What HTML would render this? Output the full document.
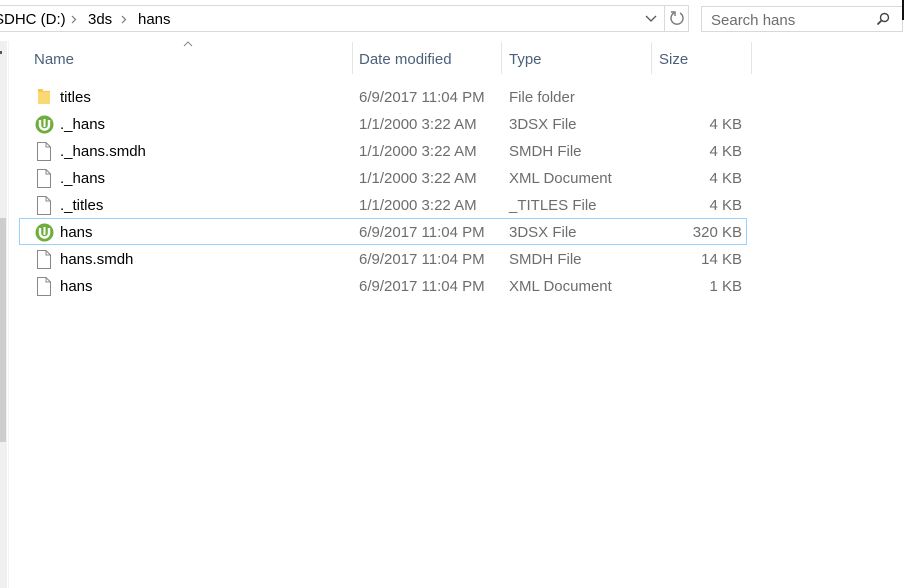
<!DOCTYPE html>
<html><head><style>
*{margin:0;padding:0;box-sizing:border-box}
body{width:904px;height:588px;background:#fff;position:relative;overflow:hidden;font-family:"Liberation Sans",sans-serif;font-size:15px;color:#000}
.a{position:absolute}
.row{position:absolute;left:0;width:760px;height:27px}
.row span{position:absolute;top:6px;white-space:nowrap}
.n{left:60px;color:#000}
.d{left:359px;color:#6d6d6d}
.t{left:509px;color:#6d6d6d}
.s{right:18px;color:#6d6d6d}
.ic{position:absolute;left:35px;top:5px}
</style></head><body>
<div class="a" style="left:-1px;top:5px;width:690px;height:27px;border:1px solid #d9d9d9"></div>
<div class="a" style="left:664px;top:5px;width:1px;height:27px;background:#d9d9d9"></div>
<div class="a" style="left:-6px;top:11px">SDHC (D:)</div>
<svg class="a" style="left:71px;top:15px" width="6" height="9"><path d="M1 1 L4.5 4.5 L1 8" stroke="#777" stroke-width="1.2" fill="none"/></svg>
<div class="a" style="left:88px;top:11px">3ds</div>
<svg class="a" style="left:121px;top:15px" width="6" height="9"><path d="M1 1 L4.5 4.5 L1 8" stroke="#777" stroke-width="1.2" fill="none"/></svg>
<div class="a" style="left:138px;top:11px">hans</div>
<svg class="a" style="left:645px;top:15px" width="12" height="8"><path d="M1 1 L6 6 L11 1" stroke="#555" stroke-width="1.3" fill="none"/></svg>
<svg class="a" style="left:669px;top:10px" width="16" height="16"><path d="M5 3 A6 6 0 1 0 11 3" stroke="#777" stroke-width="1.4" fill="none"/><path d="M2 2 L6 2 L6 6" stroke="#777" stroke-width="1.4" fill="none"/></svg>
<div class="a" style="left:701px;top:6px;width:202px;height:26px;border:1px solid #d9d9d9"></div>
<div class="a" style="left:711px;top:12px;color:#6d6d6d">Search hans</div>
<svg class="a" style="left:876px;top:12px" width="14" height="14"><circle cx="8.5" cy="5.5" r="4" stroke="#444" stroke-width="1.4" fill="none"/><path d="M5.5 8.5 L1.5 12.5" stroke="#444" stroke-width="1.8"/></svg>
<div class="a" style="left:902px;top:0;width:2px;height:20px;background:#111"></div>
<div class="a" style="left:0;top:41px;width:7px;height:547px;background:#f0f0f0"></div>
<div class="a" style="left:0;top:218px;width:6px;height:224px;background:#cdcdcd"></div>
<div class="a" style="left:8px;top:41px;width:1px;height:547px;background:#f3f3f3"></div>
<div class="a" style="left:0;top:51px;width:2px;height:3px;background:#555"></div>
<svg class="a" style="left:183px;top:41px" width="10" height="6"><path d="M1 5 L5 1 L9 5" stroke="#888" fill="none"/></svg>
<div class="a" style="left:34px;top:51px;color:#4c607a">Name</div>
<div class="a" style="left:359px;top:51px;color:#4c607a">Date modified</div>
<div class="a" style="left:509px;top:51px;color:#4c607a">Type</div>
<div class="a" style="left:659px;top:51px;color:#4c607a">Size</div>
<div class="a" style="left:352px;top:42px;width:1px;height:32px;background:#e5e5e5"></div>
<div class="a" style="left:501px;top:42px;width:1px;height:32px;background:#e5e5e5"></div>
<div class="a" style="left:651px;top:42px;width:1px;height:32px;background:#e5e5e5"></div>
<div class="a" style="left:751px;top:42px;width:1px;height:32px;background:#e5e5e5"></div>
<div class="a" style="left:19px;top:218px;width:728px;height:27px;border:1px solid #99d1ff"></div>

<div class="row" style="top:83px"><svg class="ic" style="left:37px" width="14" height="17"><path d="M1 1 H6 V3 H13 V16 H1 Z" fill="#f5c94f"/><rect x="1" y="4" width="12" height="12" fill="#fbd872"/></svg><span class="n">titles</span><span class="d">6/9/2017 11:04 PM</span><span class="t">File folder</span></div>

<div class="row" style="top:110px"><svg class="ic" width="19" height="19"><circle cx="9.5" cy="9.5" r="9" fill="#6fae3d"/><path d="M5 5 V10 A4.5 4.5 0 0 0 14 10 V5" stroke="#fff" stroke-width="2.4" fill="none"/><path d="M9.5 4 V12" stroke="#fff" stroke-width="2"/></svg><span class="n">._hans</span><span class="d">1/1/2000 3:22 AM</span><span class="t">3DSX File</span><span class="s">4 KB</span></div>

<div class="row" style="top:137px"><svg class="ic" style="left:37px" width="14" height="19"><path d="M0.5 0.5 H9 L13.5 5 V18.5 H0.5 Z" fill="#fff" stroke="#888"/><path d="M9 0.5 V5 H13.5" fill="none" stroke="#888"/></svg><span class="n">._hans.smdh</span><span class="d">1/1/2000 3:22 AM</span><span class="t">SMDH File</span><span class="s">4 KB</span></div>

<div class="row" style="top:164px"><svg class="ic" style="left:37px" width="14" height="19"><path d="M0.5 0.5 H9 L13.5 5 V18.5 H0.5 Z" fill="#fff" stroke="#888"/><path d="M9 0.5 V5 H13.5" fill="none" stroke="#888"/></svg><span class="n">._hans</span><span class="d">1/1/2000 3:22 AM</span><span class="t">XML Document</span><span class="s">4 KB</span></div>

<div class="row" style="top:191px"><svg class="ic" style="left:37px" width="14" height="19"><path d="M0.5 0.5 H9 L13.5 5 V18.5 H0.5 Z" fill="#fff" stroke="#888"/><path d="M9 0.5 V5 H13.5" fill="none" stroke="#888"/></svg><span class="n">._titles</span><span class="d">1/1/2000 3:22 AM</span><span class="t">_TITLES File</span><span class="s">4 KB</span></div>

<div class="row" style="top:218px"><svg class="ic" width="19" height="19"><circle cx="9.5" cy="9.5" r="9" fill="#6fae3d"/><path d="M5 5 V10 A4.5 4.5 0 0 0 14 10 V5" stroke="#fff" stroke-width="2.4" fill="none"/><path d="M9.5 4 V12" stroke="#fff" stroke-width="2"/></svg><span class="n">hans</span><span class="d">6/9/2017 11:04 PM</span><span class="t">3DSX File</span><span class="s">320 KB</span></div>

<div class="row" style="top:245px"><svg class="ic" style="left:37px" width="14" height="19"><path d="M0.5 0.5 H9 L13.5 5 V18.5 H0.5 Z" fill="#fff" stroke="#888"/><path d="M9 0.5 V5 H13.5" fill="none" stroke="#888"/></svg><span class="n">hans.smdh</span><span class="d">6/9/2017 11:04 PM</span><span class="t">SMDH File</span><span class="s">14 KB</span></div>

<div class="row" style="top:272px"><svg class="ic" style="left:37px" width="14" height="19"><path d="M0.5 0.5 H9 L13.5 5 V18.5 H0.5 Z" fill="#fff" stroke="#888"/><path d="M9 0.5 V5 H13.5" fill="none" stroke="#888"/></svg><span class="n">hans</span><span class="d">6/9/2017 11:04 PM</span><span class="t">XML Document</span><span class="s">1 KB</span></div>
</body></html>
